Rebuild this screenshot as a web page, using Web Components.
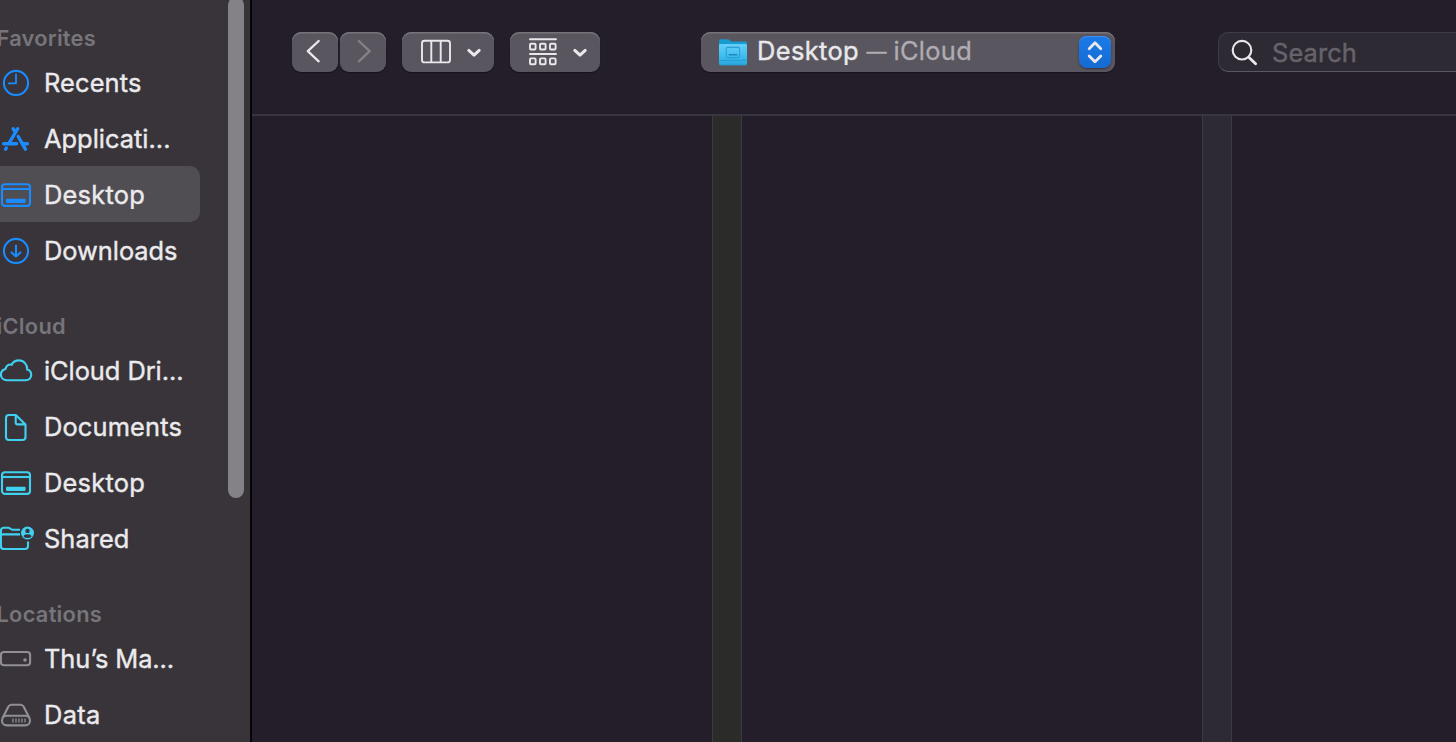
<!DOCTYPE html>
<html lang="en">
<head>
<meta charset="utf-8">
<title>Desktop</title>
<style>
body{margin:0;width:1456px;height:742px;overflow:hidden;background:#231e29;font-family:Inter,"Liberation Sans",sans-serif}
</style>
</head>
<body>
<file-dialog></file-dialog>
<script>
const define = (name, html, setup) => {
  const t = document.createElement('template');
  t.innerHTML = html;
  customElements.define(name, class extends HTMLElement {
    connectedCallback() {
      if (this.shadowRoot) return;
      this.attachShadow({mode: 'open'}).append(t.content.cloneNode(true));
      if (setup) setup.call(this, this.shadowRoot);
    }
  });
};

const desktop = '<rect x="2" y="18.3" width="28" height="21.6" rx="3"/><path d="M2 23H30"/><rect x="6" y="32.7" width="19.6" height="4.2" rx=".8" fill="currentColor" stroke="none"/>';
const icons = {
  clock: '<circle cx="16" cy="29" r="12.1"/><path d="M16 20.5V29.4H8.7" stroke-linecap="round" stroke-linejoin="round" stroke-width="1.8"/>',
  apps: '<g stroke-width="3.4" stroke-linecap="round"><path d="M17.6 18.8L8.8 33.5M13.2 18.8L15.2 22M18.2 26.5L25.4 39.2M3.6 33.7H16.5M23 33.7H27.4M6.3 38L5.6 39.2"/></g>',
  desktop,
  download: '<circle cx="16" cy="29" r="12.1"/><path d="M16 23.5V34.4M11.6 30.4L16 34.6L20.4 30.4" stroke-linecap="round" stroke-linejoin="round"/>',
  cloud: '<path d="M6.7 38.2H25.4C29 38.2 31.2 36 31.2 33C31.2 30.2 29.6 28.2 27.2 27.6C27.4 22.6 23.8 18.4 18.9 18.4C15.6 18.4 13 20 11.7 22.7C8.8 21.9 5.8 23.8 5.5 27C2.8 27.7 .9 29.6 .9 32.6C.9 35.8 3.3 38.2 6.7 38.2Z"/>',
  doc: '<path d="M9 17H15.8L25.5 26.6V39A3 3 0 0 1 22.5 42H9A3 3 0 0 1 6 39V20A3 3 0 0 1 9 17ZM15.7 17V24.4A2 2 0 0 0 17.7 26.4H25.5" stroke-linejoin="round"/>',
  shared: '<path d="M20 19.7H12.4C10.8 19.7 10 17.8 8.3 17.8H3.6A2.8 2.8 0 0 0 .9 20.6V36A3 3 0 0 0 3.9 39H25A3 3 0 0 0 28 36V31.5M1 24.4H20"/><circle cx="27.5" cy="23" r="6.5" fill="currentColor" stroke="none"/><circle cx="27.5" cy="20.9" r="2.2" fill="#38343a" stroke="none"/><path d="M23.5 26.7Q24 24.3 27.5 24.3Q31 24.3 31.5 26.7Q30 28 27.5 28Q25 28 23.5 26.7Z" fill="#38343a" stroke="none"/>',
  mac: '<rect x=".9" y="22" width="29.2" height="13.2" rx="3"/><circle cx="25" cy="30" r="1.8" fill="currentColor" stroke="none"/>',
  disk: '<rect x="2" y="29.8" width="28" height="9.6" rx="4.6"/><path d="M2.6 32L8.3 20.8Q9.3 18.8 11.5 18.8H20.5Q22.7 18.8 23.7 20.8L29.4 32"/><path d="M13 32.6V36.6M16 32.6V36.6M19 32.6V36.6M22 32.6V36.6M25 32.6V36.6" stroke-width="1.3"/>'
};

/* Single line of text tracked to a given advance width. */
define('tracked-text', `
<style>:host{display:inline-block;white-space:nowrap}span{display:inline-block;white-space:pre}</style>
<span><slot></slot></span>`, function (root) {
  const s = root.querySelector('span'), w = +this.getAttribute('width');
  const n = this.textContent.length;
  s.style.letterSpacing = ((w - s.getBoundingClientRect().width) / n).toFixed(3) + 'px';
});

define('side-row', `
<style>
:host{display:flex;height:56px;width:200px;align-items:center;color:#1a8cff;border-radius:0 10px 10px 0}
:host([selected]){background:#504d53}
:host([tone=cyan]){color:#3fd1f0}
:host([tone=gray]){color:#918f93}
svg{display:block;flex:none;width:44px;height:56px;fill:none;stroke:currentColor;stroke-width:2.1}
div{color:#ebeaec;font-size:25.4px;line-height:56px;-webkit-text-stroke:.4px #ebeaec;padding-top:1px}
</style>
<svg viewBox="0 0 44 56"></svg><div><slot></slot></div>`, function (root) {
  root.querySelector('svg').innerHTML = icons[this.getAttribute('icon')];
});

define('side-group', `
<style>
:host{display:block;padding-top:32px}
:host([first]){padding-top:22px}
header{height:32px;line-height:32px;font-size:21.8px;font-weight:600;color:#77747a;margin-left:-3.5px}
</style>
<header><slot name="title"></slot></header><slot></slot>`);

define('side-bar', `
<style>
:host{display:flex;justify-content:space-between;width:250px;height:742px;flex:none;background:#38343a;border-right:2px solid #060508;overflow:hidden}
nav{width:228px}
i{width:16px;height:501px;margin:-3px 6px 0 0;border-radius:8px;background:#858287}
</style>
<nav><slot></slot></nav><i></i>`);

define('tool-button', `
<style>
:host{display:flex;box-sizing:border-box;height:40px;border-radius:9px;background:#5a565f;box-shadow:inset 0 1.5px 0 #77737b,0 1px 1px #17131c;color:#e9e8eb}
::slotted(svg){display:block;fill:none;stroke:currentColor;stroke-linecap:round;stroke-linejoin:round}
</style><slot></slot>`);

define('search-field', `
<style>
:host{display:flex;box-sizing:border-box;align-items:center;width:260px;height:40px;flex:none;border:1px solid #403c46;border-bottom:1.5px solid #5b5761;border-radius:10px;background:#2e2a34;color:#67636b;font-size:25.4px;-webkit-text-stroke:.4px #67636b}
svg{width:53px;height:38px;flex:none;fill:none;stroke:#e9e8eb;stroke-linecap:round}
</style>
<svg viewBox="1 1 53 38"><circle cx="24" cy="18.2" r="9.3" stroke-width="2.1"/><path d="M31 25.4L37.6 31.8" stroke-width="2.8"/></svg>
<div><slot></slot></div>`);

define('path-popup', `
<style>
:host{display:block}
tool-button{width:414px;align-items:center}
.folder{width:56px;height:40px;flex:none;stroke:none}
div{flex:1;font-size:25.4px;line-height:38px;display:flex;-webkit-text-stroke:.4px;height:40px}
.dim{color:#afacb2;-webkit-text-stroke:.3px}
.dash{font-size:20px;margin:0 3px 0 7.5px;padding-top:1px}
.arrows{width:32px;height:32px;margin-right:4px;border-radius:8px;background:linear-gradient(#1b7bea,#146bd0);box-shadow:0 1px 2px #35313a,inset 0 1px 0 #438eea}
</style>
<tool-button>
<svg class="folder" viewBox="0 0 56 40">
<defs><linearGradient id="f" x2="0" y2="1"><stop stop-color="#64d0fa"/><stop offset=".7" stop-color="#37b8ed"/><stop offset="1" stop-color="#2aa7dd"/></linearGradient></defs>
<path d="M18 9Q18 7.2 20 7.2H26Q28 7.2 29 8.5L30 9.6H44.5Q46 9.6 46 11V15H18Z" fill="#179bd0"/>
<path d="M18 13.4Q18 12 19.5 12H44.5Q46 12 46 13.4V31.5Q46 33 44.5 33H19.5Q18 33 18 31.5Z" fill="url(#f)"/>
<path d="M18 28.4H46M19 33H45" stroke="#2599cc" stroke-width=".9"/>
<rect x="25.2" y="15.4" width="13.4" height="10.2" rx="1.5" stroke="#2f9fd2" stroke-width="1.1" fill="none"/>
<path d="M28.2 22.8H35.8" stroke="#2089bc" stroke-width="1.4"/>
</svg>
<div><tracked-text width="102">Desktop</tracked-text><tracked-text class="dim dash" width="24">—</tracked-text><tracked-text class="dim" width="78.5">iCloud</tracked-text></div>
<svg class="arrows" viewBox="0 0 32 32"><path d="M10.2 12.7L16 6.8L21.8 12.7M10.2 20L16 25.8L21.8 20" stroke-width="2.8"/></svg>
</tool-button>`);

define('tool-bar', `
<style>
:host{display:flex;box-sizing:border-box;height:116px;padding:32px 0 0 40px;border-bottom:2px solid #39343f;overflow:hidden}
tool-button,path-popup{flex:none}
.back{width:46px;margin-right:2px}.next{width:46px;margin-right:16px;color:#848188}
.cols{width:92px;margin-right:16px}.group{width:90px;margin-right:101px}
path-popup{margin-right:103px}
</style>
<tool-button class="back"><svg width="46" height="40" stroke-width="2.3"><path d="M26.7 9L15.8 19.2L26.7 29.3"/></svg></tool-button>
<tool-button class="next"><svg width="46" height="40" stroke-width="2.3"><path d="M18.8 9L29.7 19.2L18.8 29.3"/></svg></tool-button>
<tool-button class="cols"><svg width="92" height="40" stroke-width="1.9"><rect x="20" y="8.8" width="28" height="21.6" rx="2.5"/><path d="M29.3 9V30M38.7 9V30"/><path d="M66.8 18.4L72 23.2L77.2 18.4" stroke-width="3"/></svg></tool-button>
<tool-button class="group"><svg width="90" height="40" stroke-width="1.9"><path d="M20 7.2H46M20 22H46"/><g><rect x="20" y="11.7" width="5.6" height="5.8" rx="1"/><rect x="30" y="11.7" width="5.6" height="5.8" rx="1"/><rect x="40" y="11.7" width="5.6" height="5.8" rx="1"/><rect x="20" y="26.4" width="5.6" height="5.8" rx="1"/><rect x="30" y="26.4" width="5.6" height="5.8" rx="1"/><rect x="40" y="26.4" width="5.6" height="5.8" rx="1"/></g><path d="M64.8 18.4L70 23.2L75.2 18.4" stroke-width="3"/></svg></tool-button>
<path-popup></path-popup>
<search-field><tracked-text width="85">Search</tracked-text></search-field>`);

define('column-view', `
<style>
:host{display:grid;grid-template-columns:460px 30px 460px 30px 1fr;flex:1}
i{border:solid #3d3a42;border-width:0 1px;background:#2d2a34}
i.a{background:#2b2b2a;border-color:#3c3b3d}
</style>
<b></b><i class="a"></i><b></b><i></i><b></b>`);

define('file-dialog', `
<style>
:host{display:flex;width:1456px;height:742px;overflow:hidden}
main{display:flex;flex-direction:column;flex:1;min-width:0}
</style>
<side-bar>
<side-group first><tracked-text slot="title" width="99.5">Favorites</tracked-text>
<side-row icon="clock"><tracked-text width="97.5">Recents</tracked-text></side-row>
<side-row icon="apps"><tracked-text width="126.5">Applicati...</tracked-text></side-row>
<side-row icon="desktop" selected><tracked-text width="101">Desktop</tracked-text></side-row>
<side-row icon="download"><tracked-text width="133.5">Downloads</tracked-text></side-row></side-group>
<side-group><tracked-text slot="title" width="69.5">iCloud</tracked-text>
<side-row icon="cloud" tone="cyan"><tracked-text width="139.5">iCloud Dri...</tracked-text></side-row>
<side-row icon="doc" tone="cyan"><tracked-text width="138">Documents</tracked-text></side-row>
<side-row icon="desktop" tone="cyan"><tracked-text width="101">Desktop</tracked-text></side-row>
<side-row icon="shared" tone="cyan"><tracked-text width="85.5">Shared</tracked-text></side-row></side-group>
<side-group><tracked-text slot="title" width="105.5">Locations</tracked-text>
<side-row icon="mac" tone="gray"><tracked-text width="130">Thu’s Ma...</tracked-text></side-row>
<side-row icon="disk" tone="gray"><tracked-text width="56.5">Data</tracked-text></side-row></side-group>
</side-bar>
<main><tool-bar></tool-bar><column-view></column-view></main>`);
</script>
</body>
</html>
